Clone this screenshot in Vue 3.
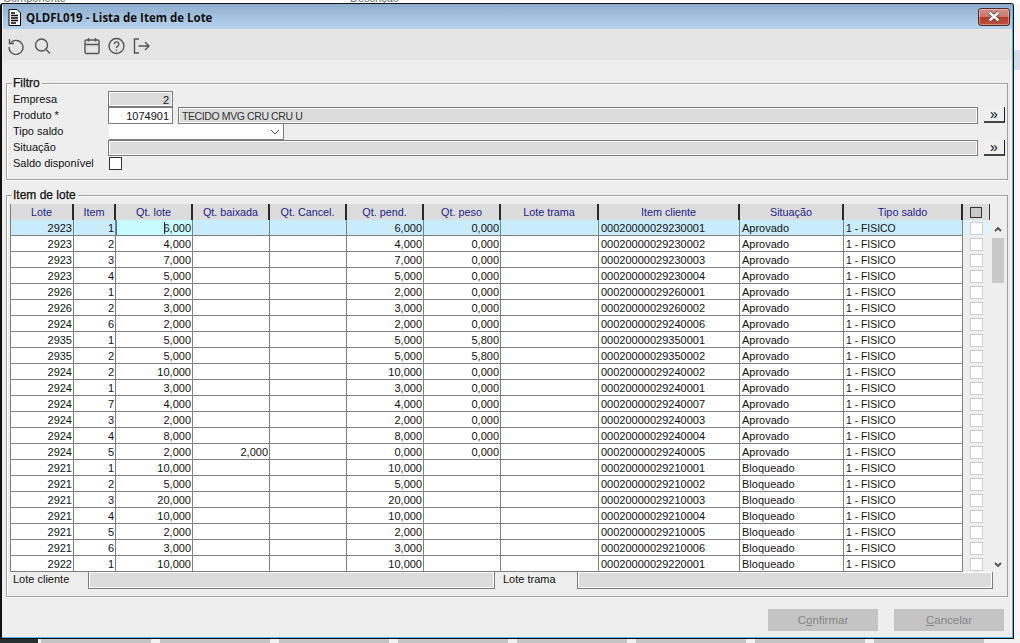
<script setup>
const raw = [
  [2923, 1, '6,000', '', '6,000', '0,000', 'Aprovado'],
  [2923, 2, '4,000', '', '4,000', '0,000', 'Aprovado'],
  [2923, 3, '7,000', '', '7,000', '0,000', 'Aprovado'],
  [2923, 4, '5,000', '', '5,000', '0,000', 'Aprovado'],
  [2926, 1, '2,000', '', '2,000', '0,000', 'Aprovado'],
  [2926, 2, '3,000', '', '3,000', '0,000', 'Aprovado'],
  [2924, 6, '2,000', '', '2,000', '0,000', 'Aprovado'],
  [2935, 1, '5,000', '', '5,000', '5,800', 'Aprovado'],
  [2935, 2, '5,000', '', '5,000', '5,800', 'Aprovado'],
  [2924, 2, '10,000', '', '10,000', '0,000', 'Aprovado'],
  [2924, 1, '3,000', '', '3,000', '0,000', 'Aprovado'],
  [2924, 7, '4,000', '', '4,000', '0,000', 'Aprovado'],
  [2924, 3, '2,000', '', '2,000', '0,000', 'Aprovado'],
  [2924, 4, '8,000', '', '8,000', '0,000', 'Aprovado'],
  [2924, 5, '2,000', '2,000', '0,000', '0,000', 'Aprovado'],
  [2921, 1, '10,000', '', '10,000', '', 'Bloqueado'],
  [2921, 2, '5,000', '', '5,000', '', 'Bloqueado'],
  [2921, 3, '20,000', '', '20,000', '', 'Bloqueado'],
  [2921, 4, '10,000', '', '10,000', '', 'Bloqueado'],
  [2921, 5, '2,000', '', '2,000', '', 'Bloqueado'],
  [2921, 6, '3,000', '', '3,000', '', 'Bloqueado'],
  [2922, 1, '10,000', '', '10,000', '', 'Bloqueado'],
]
const rows = raw.map(([lote, item, qt, baixada, pend, peso, situacao]) => ({
  lote, item, qt, baixada, pend, peso, situacao,
  cliente: '000200000' + lote + String(item).padStart(4, '0'),
}))
const headers = ['Lote', 'Item', 'Qt. lote', 'Qt. baixada', 'Qt. Cancel.', 'Qt. pend.', 'Qt. peso', 'Lote trama', 'Item cliente', 'Situação', 'Tipo saldo']
const strips = [41, 160, 279, 398, 517, 636, 755, 874]
</script>

<template>
  <div class="desktop">
    <div class="bg-top">
      <span class="bg-a">Componente</span>
      <span class="bg-b">Descrição</span>
    </div>
    <div class="bg-right"></div>
    <div class="bg-bottom">
      <i v-for="x in strips" :key="x" class="strip" :style="{ left: x + 'px' }"></i>
    </div>

    <div class="window">
      <div class="titlebar">
        <svg class="doc" width="13" height="17" viewBox="0 0 13 17">
          <path d="M1 .5h8l3.500 3.500v12.500h-11.500z" fill="#fff" stroke="#000" />
          <path d="M3 4h4M3 6.500h7M3 9h7M3 11.500h7M3 14h5" stroke="#000" stroke-width="1.300" />
        </svg>
        <span class="title">QLDFL019 - Lista de Item de Lote</span>
        <div class="close">
          <svg width="14" height="11" viewBox="0 0 14 11">
            <path d="M2.500 1.500L11.500 9.500M11.500 1.500L2.500 9.500" stroke="#4a3a3a" stroke-width="4" />
            <path d="M2.500 1.500L11.500 9.500M11.500 1.500L2.500 9.500" stroke="#f4f4f4" stroke-width="2.600" />
          </svg>
        </div>
      </div>

      <div class="toolbar">
        <svg class="ic" width="18" height="18" viewBox="0 0 18 18">
          <path d="M4 5.500A7 7 0 1 1 2 10" />
          <path d="M2.500 2v4.500H7" />
        </svg>
        <svg class="ic ic-search" width="17" height="18" viewBox="0 0 17 18">
          <circle cx="7.500" cy="8" r="6" />
          <path d="M12 12.500l4 4" />
        </svg>
        <svg class="ic ic-cal" width="16" height="18" viewBox="0 0 16 18">
          <rect x="1" y="3" width="14" height="13.500" rx="1.500" />
          <path d="M1 7.500h14M4.500 1v3.500M11.500 1v3.500" />
        </svg>
        <svg class="ic ic-help" width="17" height="18" viewBox="0 0 17 18">
          <circle cx="8.500" cy="9" r="7.500" />
          <path d="M6.300 7.200a2.300 2.300 0 1 1 3.400 2c-.8.500-1.200.9-1.200 1.800M8.500 12.500v1.300" />
        </svg>
        <svg class="ic ic-exit" width="17" height="18" viewBox="0 0 17 18">
          <path d="M6 2H1.500v14H6M5.500 9H16M12 5l4 4-4 4" />
        </svg>
      </div>

      <div class="content">
        <section class="group filter">
          <span class="legend">Filtro</span>
          <div class="form">
            <label class="lbl">Empresa</label>
            <div class="field ro num short">2</div>
            <label class="lbl">Produto *</label>
            <div class="product">
              <div class="field num short white">1074901</div>
              <div class="field ro grow desc">TECIDO MVG CRU CRU U</div>
              <button class="more">»</button>
            </div>
            <label class="lbl up">Tipo saldo</label>
            <div class="field white select">
              <svg width="10" height="6" viewBox="0 0 10 6"><path d="M1 1l4 4 4-4" fill="none" stroke="#444" /></svg>
            </div>
            <label class="lbl up">Situação</label>
            <div class="product">
              <div class="field ro grow first"></div>
              <button class="more">»</button>
            </div>
            <label class="lbl up">Saldo disponível</label>
            <div><div class="check-main"></div></div>
          </div>
        </section>

        <section class="group items">
          <span class="legend">Item de lote</span>
          <div class="table-wrap">
            <div class="table">
              <div class="row head">
                <div v-for="h in headers" :key="h" class="th">{{ h }}</div>
                <div class="th th-check"><i class="head-box"></i></div>
              </div>
              <div v-for="(r, i) in rows" :key="i" class="row" :class="{ selected: i === 0 }">
                <div class="td r">{{ r.lote }}</div>
                <div class="td r">{{ r.item }}</div>
                <div class="td r" :class="{ focus: i === 0 }"><i v-if="i === 0" class="caret"></i>{{ r.qt }}</div>
                <div class="td r">{{ r.baixada }}</div>
                <div class="td r"></div>
                <div class="td r">{{ r.pend }}</div>
                <div class="td r">{{ r.peso }}</div>
                <div class="td"></div>
                <div class="td">{{ r.cliente }}</div>
                <div class="td">{{ r.situacao }}</div>
                <div class="td tipo">1 - FISICO</div>
                <div class="td-check"><i class="box"></i></div>
              </div>
            </div>
            <div class="scrollbar">
              <svg width="12" height="16" viewBox="0 0 12 16"><path d="M3 11l3-3 3 3" fill="none" stroke="#505050" stroke-width="1.800" /></svg>
              <div class="thumb"></div>
              <svg class="down" width="12" height="16" viewBox="0 0 12 16"><path d="M3 7l3 3 3-3" fill="none" stroke="#505050" stroke-width="1.800" /></svg>
            </div>
          </div>
          <div class="extras">
            <span class="lbl lc">Lote cliente</span>
            <div class="field ro ex1"></div>
            <span class="lbl lt">Lote trama</span>
            <div class="field ro ex2"></div>
          </div>
        </section>

        <div class="footer">
          <button class="btn">C<u>o</u>nfirmar</button>
          <button class="btn"><u>C</u>ancelar</button>
        </div>
      </div>
    </div>
  </div>
</template>

<style>
html, body { margin: 0; padding: 0; overflow: hidden; }
</style>

<style scoped>
.desktop {
  position: relative;
  width: 1020px;
  height: 643px;
  overflow: hidden;
  background: #f6f6f6;
  font-family: "Liberation Sans", Arial, sans-serif;
  font-size: 11px;
  color: #111;
}
.bg-top { position: absolute; left: 0; top: 0; width: 1020px; height: 4px; background: #fff; overflow: hidden; color: #666; }
.bg-a { position: absolute; left: 3px; top: -8px; }
.bg-b { position: absolute; left: 350px; top: -8px; }
.bg-right { position: absolute; left: 1014px; top: 50px; width: 6px; height: 20px; background: #d4dde6; }
.bg-bottom { position: absolute; left: 0; top: 639px; width: 1020px; height: 4px; background: #f2f2f2; }
.bg-bottom::before { content: ""; position: absolute; left: 0; top: 0; width: 38px; height: 4px; background: #26302f; }
.strip { position: absolute; top: 0; width: 110px; height: 4px; background: #c4c4c4; }

.window {
  position: absolute;
  left: 0;
  top: 3px;
  width: 1014px;
  height: 636px;
  box-sizing: border-box;
  display: flex;
  flex-direction: column;
  border: 1px solid #111;
  border-left-width: 2px;
  border-radius: 3px 3px 0 0;
  background: #eee;
  box-shadow: inset -1px -1px 0 #55b8e8;
}
.titlebar {
  flex: none;
  height: 25px;
  margin-left: 1px;
  margin-right: 1px;
  display: flex;
  align-items: center;
  background: linear-gradient(#8eadcd, #b9d3ee);
}
.doc { margin-left: 5px; margin-top: 1px; }
.title { margin-left: 5px; margin-top: 2px; font-family: "Open Sans", sans-serif; font-size: 11.500px; font-weight: 700; color: #111; }
.close {
  margin-left: auto;
  margin-right: 2px;
  width: 32px;
  height: 18px;
  box-sizing: border-box;
  border: 1px solid #4d2a2a;
  border-radius: 3px;
  display: flex;
  align-items: center;
  justify-content: center;
  background: linear-gradient(#d58a80 0%, #c97a70 48%, #b33a28 52%, #c0503e 100%);
  box-shadow: inset 0 0 0 1px rgba(255, 255, 255, .35);
}
.toolbar {
  flex: none;
  height: 31px;
  box-sizing: border-box;
  margin-left: 1px;
  margin-right: 1px;
  display: flex;
  align-items: center;
  padding: 2px 0 0 4px;
  background: #e5e5e5;
}
.ic { fill: none; stroke: #555; stroke-width: 1.400; }
.ic-search { margin-left: 9px; }
.ic-cal { margin-left: 33px; }
.ic-help { margin-left: 8px; }
.ic-exit { margin-left: 8px; }

.content {
  flex: 1;
  padding: 23px 5px 0 4px;
  display: flex;
  flex-direction: column;
}
.group {
  position: relative;
  border: 1px solid #a0a0a0;
  box-shadow: inset 1px 1px 0 #fff, 0 1px 0 #fff;
}
.legend {
  position: absolute;
  left: 5px;
  top: -7px;
  padding: 0 2px 0 1px;
  background: #eee;
  font-size: 12px;
  line-height: 13px;
  -webkit-text-stroke: .25px #111;
}
.filter { height: 97px; box-sizing: border-box; padding: 7px 0 0 6px; }
.form {
  display: grid;
  grid-template-columns: 95px 1fr;
  grid-template-rows: 16px 17px 16px 16px 16px;
}
.lbl { line-height: 16px; color: #111; }
.up { margin-top: -1px; }
.field {
  box-sizing: border-box;
  height: 100%;
  border: 1px solid #7c7c7c;
  line-height: 16px;
  padding: 0 3px;
  white-space: nowrap;
}
.ro { background: #dcdcdc; box-shadow: inset 0 0 0 1px #fff; border-color: #7c7c7c; }
.white { background: #fff; }
.num { text-align: right; }
.short { width: 65px; flex: none; }
.grow { flex: 1; margin-left: 5px; }
.first { margin-left: 0; }
.desc { font-size: 10.500px; letter-spacing: -.4px; color: #333; }
.product { display: flex; height: 100%; padding-right: 2px; }
.select {
  width: 175px;
  margin-left: 1px;
  border-width: 0 1px 1px 0;
  display: flex;
  align-items: center;
  justify-content: flex-end;
  padding-right: 3px;
}
.more {
  flex: none;
  width: 21px;
  height: 16px;
  margin-left: 6px;
  padding: 0;
  box-sizing: border-box;
  background: #f0f0f0;
  border: 0;
  border-right: 1px solid #222;
  border-bottom: 2px solid #444;
  font: 14px/12px "Liberation Sans", sans-serif;
  color: #000;
}
.check-main { width: 13px; height: 13px; box-sizing: border-box; margin: 1px 0 0 1px; background: #fff; border: 1px solid #333; }

.items { margin-top: 15px; height: 402px; box-sizing: border-box; padding: 8px 0 0 3px; }
.table-wrap { display: flex; }
.table { width: 981px; border-left: 1px solid #808080; }
.row {
  display: grid;
  grid-template-columns: 63px 42px 77px 77px 77px 77px 77px 98px 141px 104px 119px 27px;
  height: 16px;
}
.th {
  box-sizing: border-box;
  background: #dcdcdc;
  border-right: 2px solid #2a2a2a;
  border-bottom: 1px solid #111;
  color: #1c1c88;
  text-align: center;
  line-height: 17px;
  font-size: 10.800px;
}
.th-check { display: flex; align-items: center; justify-content: center; border-right: 1px solid #333; }
.head-box { display: block; width: 12px; height: 11px; box-sizing: border-box; background: #c8c8c8; border: 1.500px solid #333; }
.td {
  box-sizing: border-box;
  background: #fff;
  border-right: 1px solid #808080;
  border-bottom: 1px solid #808080;
  padding: 0 2px;
  line-height: 17px;
  white-space: nowrap;
  overflow: hidden;
  position: relative;
  color: #111;
}
.tipo { font-size: 10.400px; }
.r { text-align: right; padding-right: 1px; }
.selected .td { background: #c8ecfc; }
.selected .focus { background: #c8fbff; box-shadow: inset 1px 0 0 #2a7fc0; }
.caret { position: absolute; left: 48px; top: 2px; width: 1px; height: 12px; background: #222; }
.td-check { display: flex; align-items: center; justify-content: center; }
.selected .td-check { background: #e2f1f8; }
.box { display: block; width: 13px; height: 13px; box-sizing: border-box; background: #fff; border: 1px solid #cfcfcf; }

.scrollbar { width: 12px; margin-top: 16px; display: flex; flex-direction: column; height: 352px; }
.thumb { height: 45px; margin-top: 2px; background: #c8c8c8; }
.down { margin-top: auto; }

.extras {
  display: flex;
  height: 17px;
  padding-right: 14px;
}
.lc { width: 75px; padding-left: 3px; line-height: 15px; }
.lt { width: 74px; margin-left: 8px; line-height: 15px; }
.ex1 { width: 407px; border-top: 0; }
.ex2 { flex: 1; border-top: 0; }

.footer { display: flex; justify-content: flex-end; gap: 16px; margin-top: 12px; padding-right: 4px; }
.btn {
  width: 110px;
  height: 22px;
  padding: 0;
  background: #c4c4c4;
  border: 0;
  color: #858585;
  font: 11.500px "Liberation Sans", sans-serif;
}
</style>
